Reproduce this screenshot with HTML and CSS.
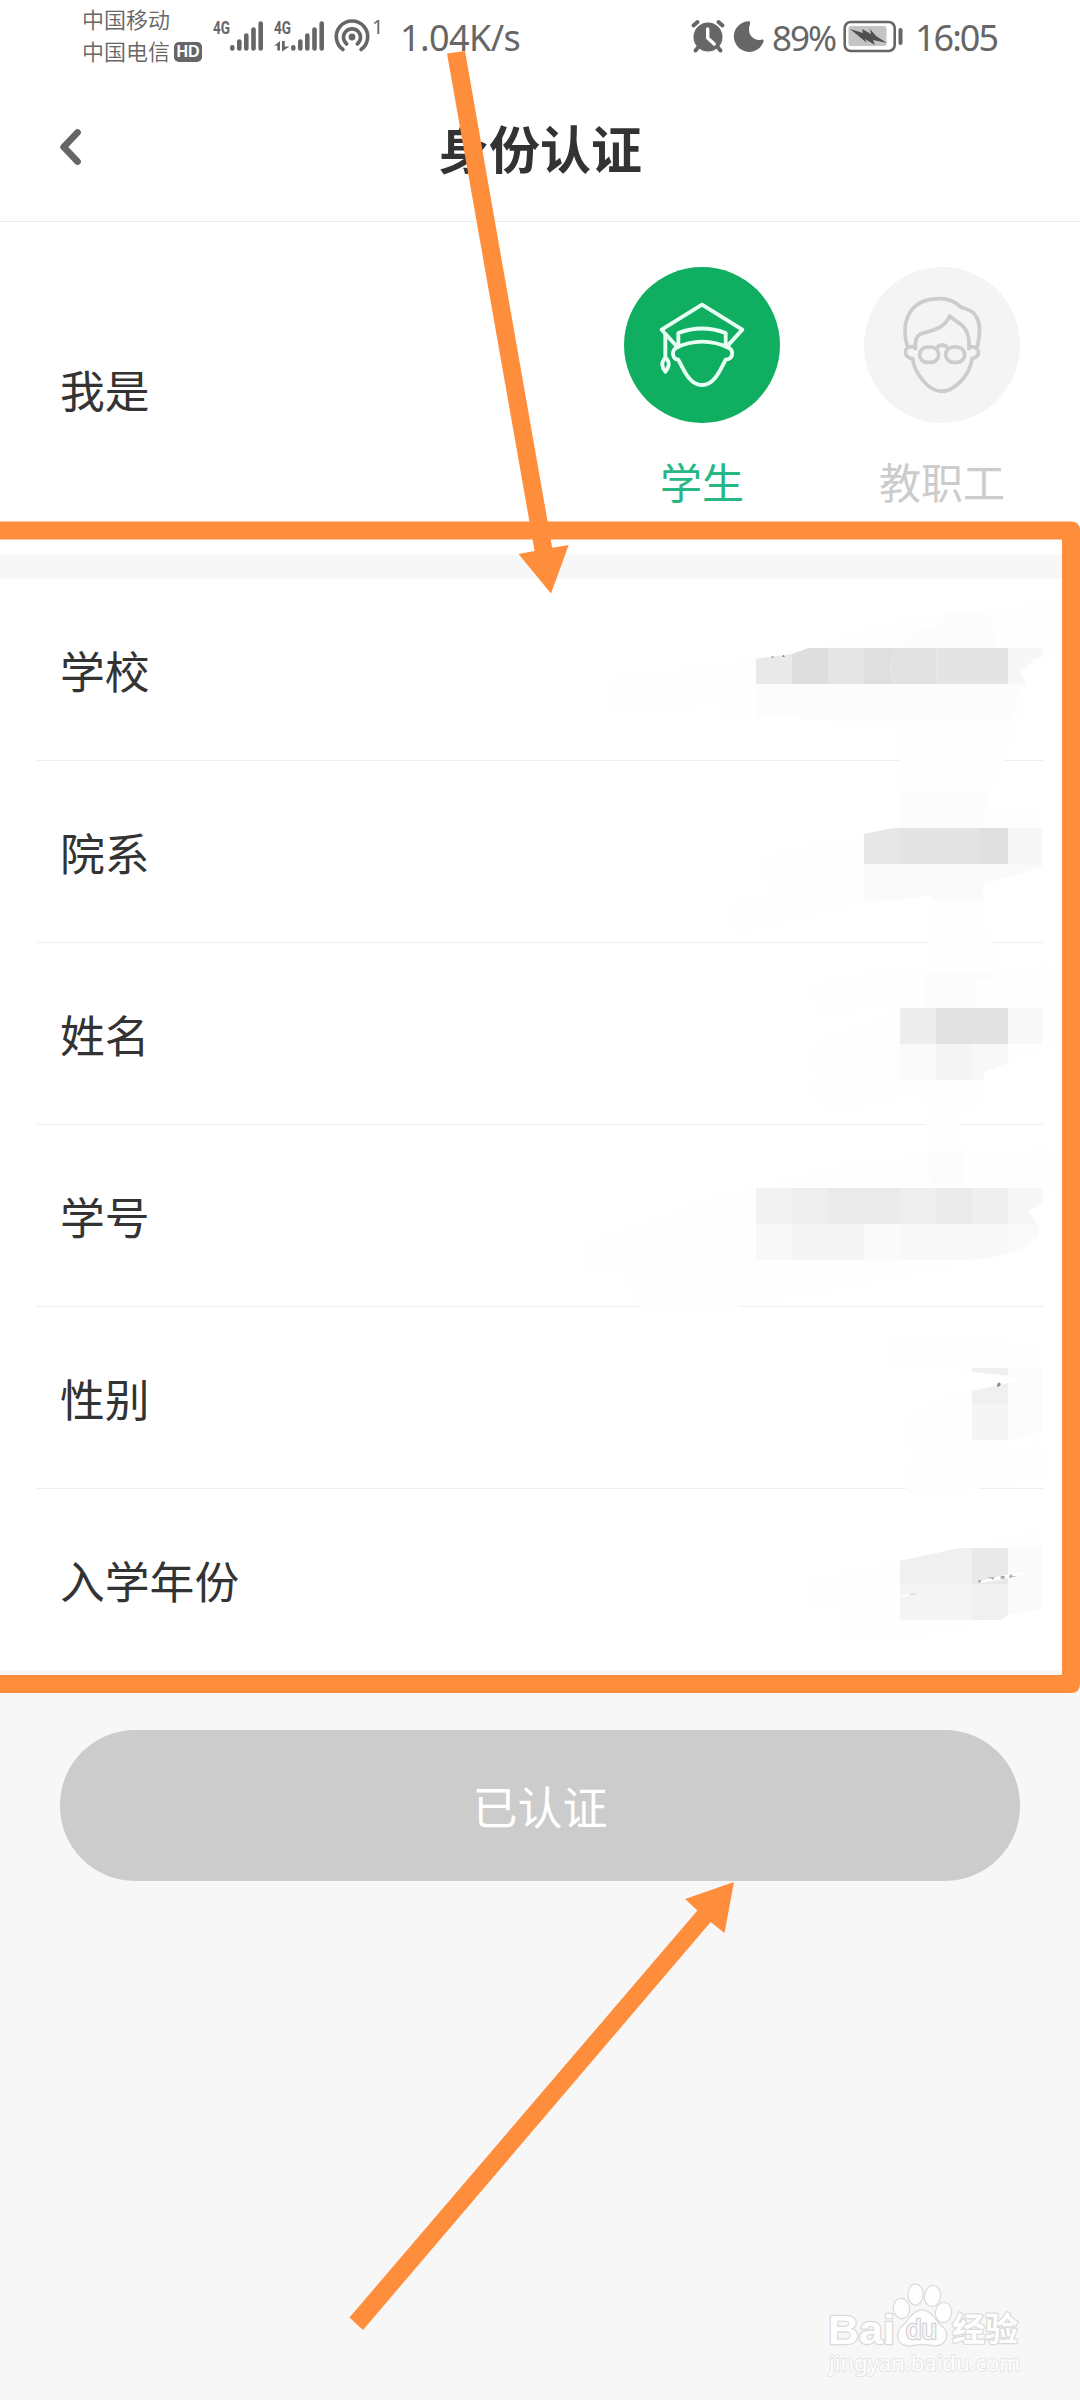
FILE: index.html
```html
<!DOCTYPE html>
<html lang="zh-CN">
<head>
<meta charset="utf-8">
<title>身份认证</title>
<link rel="stylesheet" href="styles.css">
</head>
<body>
<div class="screen">
  <header class="status">
    <div class="carriers">
      <span>中国移动</span>
      <span class="carrier-hd">中国电信<b class="hd">HD</b></span>
    </div>
    <svg class="signals" width="180" height="60" viewBox="0 0 180 60" fill="#666">
      <text class="net" x="1" y="24" textLength="17" lengthAdjust="spacingAndGlyphs">4G</text>
      <g stroke="#666" stroke-width="4.6" stroke-linecap="round">
        <path d="M20.3 37.4v1M27.3 31.500v7M34.300 25.500v13M41.500 19.500v19M48.700 13.500v25"/>
        <path d="M81.300 37.400v1M88.300 31.500v7M95.300 25.500v13M102.500 19.500v19M109.700 13.500v25"/>
      </g>
      <text class="net" x="62" y="24" textLength="17" lengthAdjust="spacingAndGlyphs">4G</text>
      <path d="M62 36l6-5v9.500h-2.700v-5zM70 31h2.700v5.500h4.800l-7.500 5z"/>
      <g fill="none" stroke="#666" stroke-width="3.600" stroke-linecap="round">
        <path d="M131 39.500a15.700 15.700 0 1 1 18 0"/>
        <path d="M134.700 34a8.500 8.500 0 1 1 10.600 0"/>
      </g>
      <circle cx="140" cy="27" r="3.400"/>
      <text class="sup" x="160" y="24">1</text>
    </svg>
    <span class="speed">1.04K/s</span>
    <svg class="alarm" width="80" height="60" viewBox="0 0 80 60" fill="#666">
      <circle cx="18" cy="28" r="14.500"/>
      <g stroke="#666" stroke-width="4" stroke-linecap="round"><path d="M3.500 16.500l4-3.500M32.500 16.500l-4-3.500M8 38.500l-2.500 3M28 38.500l2.500 3"/></g>
      <path d="M17.700 20v9l6.500 6" fill="none" stroke="#fff" stroke-width="3.400" stroke-linecap="round" stroke-linejoin="round"/>
      <path d="M58.500 12.300a15.300 15.300 0 1 0 15 20.500c.6-2-.8-2.500-2.300-2.100-8 1.800-14.500-6-11.500-14.700.8-2.400.7-4-1.200-3.700z"/>
    </svg>
    <span class="percent">89%</span>
    <svg class="battery" width="62" height="34" viewBox="0 0 62 34">
      <rect x="1.700" y="2" width="50" height="29" rx="6" fill="#fff" stroke="#666" stroke-width="2.600"/>
      <rect x="5.500" y="6" width="38" height="20" rx="2.500" fill="#c4c4c4"/>
      <path d="M7 9l13 4-1-4 9 5-1-5 6 7 11 7-14-3 2 5-10-6 2 4z" fill="#505050"/>
      <rect x="55.500" y="8" width="4" height="17" rx="2" fill="#666"/>
    </svg>
    <span class="clock">16:05</span>
  </header>

  <nav class="navbar">
    <svg class="back" width="30" height="44" viewBox="0 0 30 44"><path d="M22.500 7.500L8.700 22l13.800 14.500" fill="none" stroke="#666" stroke-width="6.800" stroke-linecap="round" stroke-linejoin="round"/></svg>
    <h1>身份认证</h1>
  </nav>

  <section class="identity">
    <span class="label">我是</span>
    <div class="roles">
      <div class="role active">
        <svg width="156" height="156" viewBox="0 0 468 468">
          <circle cx="234" cy="234" r="234" fill="#0fae61"/>
          <g fill="none" stroke="#eafff4" stroke-width="11.500" stroke-linejoin="round">
            <path d="M158 238L113 188L234 113L355 188L312 235"/>
            <path d="M163 244V198Q234 171 305 198V244"/>
            <path d="M152 244Q234 204 318 244"/>
            <path d="M163 240C142 243 141 277 163 278C176 300 194 354 234 354C274 354 292 300 305 278C331 275 330 246 308 240"/>
            <path d="M124 198V272M120 277Q108 293 124 314Q142 293 129 277Q124 270 120 277Z"/>
          </g>
        </svg>
        <span>学生</span>
      </div>
      <div class="role">
        <svg width="156" height="156" viewBox="0 0 468 468">
          <circle cx="234" cy="234" r="234" fill="#f4f4f4"/>
          <g fill="none" stroke="#ccc" stroke-width="11" stroke-linejoin="round">
            <path d="M154 250V230Q155 202 181 197C218 188 244 178 257 147C273 166 315 170 315 230V250"/>
            <path d="M132 244C108 169 132 95 228 95C257 95 277 107 290 120C306 127 323 126 334 145C350 166 350 196 339 244"/>
            <path d="M154 240C116 231 116 274 146 275C151 320 196 373 232 373C272 373 318 324 324 275C351 271 352 234 315 240"/>
            <rect x="167" y="240" width="57" height="46" rx="23"/><rect x="245" y="240" width="57" height="46" rx="23"/>
            <path d="M218 242Q234 226 251 242"/>
          </g>
        </svg>
        <span>教职工</span>
      </div>
    </div>
  </section>

  <main class="fields">
    <div class="field">学校</div>
    <div class="field">院系</div>
    <div class="field">姓名</div>
    <div class="field">学号</div>
    <div class="field">性别</div>
    <div class="field">入学年份</div>
  </main>

  <footer class="actions"><button class="submit" disabled>已认证</button></footer>

  <svg class="overlay" width="1080" height="2400" viewBox="0 0 1080 2400">
    <!-- Mosaic strokes over the field values -->
    <g transform="translate(560 590) scale(.33333)">
      <path fill="#fefefe" d="M180 255Q350 240 588 200L780 165Q900 110 1080 75L1480 35V200L1420 210L1385 245L1400 280Q1390 370 1360 450L1320 540L1270 670L1450 650V830L1270 885V1000L1310 1080H1105L1115 915L900 945L540 1035Q490 1010 500 960Q530 920 640 905Q590 850 610 805Q700 765 912 735L1020 690V400H750L710 370L560 400L490 385V345L190 375Q130 350 135 310Q140 270 180 255Z"/>
      <path fill="#fcfcfc" d="M588 282H1390L1350 395L740 390L705 370L588 383ZM1155 70Q1210 55 1275 75Q1310 100 1310 173H1020Q1070 110 1155 105ZM1022 603H1290L1270 670V713H1022Z"/>
      <path fill="#e9e9e9" d="M588 206L696 192V282H588Z"/><path fill="#dedede" d="M696 192L745 174H804V282H696Z"/>
      <path fill="#e5e5e5" d="M804 174H912V282H804Z"/><path fill="#dfdfdf" d="M912 174H1010Q975 225 1005 282H912Z"/><path fill="#e2e2e2" d="M1010 174H1130V282H1005Q975 225 1010 174Z"/><path fill="#e4e4e4" d="M1130 174H1344V282H1130Z"/>
      <path fill="#f7f7f7" d="M1344 174H1446V200L1420 208Q1405 235 1380 245L1398 282H1344Z"/>
      <path fill="#888" d="M632 203l6-6 5 7-5-2zM666 200l4-6 5 7z"/>
      <path fill="#e7e7e7" d="M912 732L1000 714H1020V822H912Z"/><path fill="#e4e4e4" d="M1020 714H1260V822H1020Z"/><path fill="#e0e0e0" d="M1260 714H1344V822H1260Z"/><path fill="#f7f7f7" d="M1344 714H1446V822H1344Z"/>
      <path fill="#fafafa" d="M912 822H1446V830L1270 883V930H1118V915L1020 930H912Z"/>
    </g>
    <g transform="translate(560 950) scale(.33333)">
      <path fill="#fefefe" d="M1100 0H1310L1325 60L1480 40V290L1275 365L1280 440Q1270 480 1200 475V550L1215 610L1480 590V730L1405 785Q1440 800 1440 850Q1430 890 1340 915L800 1030L470 1080H260Q200 1050 205 975Q130 980 85 960Q50 900 100 865Q300 810 390 760L590 705L800 650L1105 610L1090 430L850 485Q740 480 740 400L775 375Q740 350 750 290L800 260L1020 180L780 188Q745 160 760 100Q880 60 1095 50Z"/>
      <path fill="#fcfcfc" d="M1095 66H1320L1275 96L1240 90L1255 174H1095ZM1100 605H1205L1215 714H1115Z"/>
      <path fill="#ededed" d="M1020 174H1128V282H1020Z"/><path fill="#e2e2e2" d="M1128 174H1344V282H1128Z"/><path fill="#f8f8f8" d="M1344 174H1446V282H1344Z"/>
      <path fill="#fafafa" d="M1020 282H1128V390H1020Z"/><path fill="#f5f5f5" d="M1128 282H1238V390H1128Z"/><path fill="#f8f8f8" d="M1238 282H1344V340L1273 365V390H1238Z"/>
      <path fill="#f2f2f2" d="M588 714H696V822H588Z"/><path fill="#eee" d="M696 714H804V822H696Z"/><path fill="#eaeaea" d="M804 714H1020V822H804Z"/><path fill="#eee" d="M1020 714H1128V822H1020Z"/><path fill="#ebebeb" d="M1128 714H1238V822H1128Z"/><path fill="#efefef" d="M1238 714H1344V822H1238Z"/><path fill="#f7f7f7" d="M1344 714H1446V765L1405 783L1430 822H1344Z"/>
      <path fill="#f8f8f8" d="M588 822H696V930H588ZM1020 822H1344V910Q1280 930 1200 930H1020Z"/><path fill="#f5f5f5" d="M696 822H912V930H696Z"/><path fill="#fafafa" d="M912 822H1020V930H912ZM1344 822H1435Q1455 880 1344 910Z"/>
    </g>
    <g transform="translate(560 1310) scale(.33333)">
      <path fill="#fefefe" d="M990 85Q1150 50 1450 110V370L1200 435L1455 400V510L1280 530Q1180 560 1060 560Q1020 530 1030 490L1070 445Q1000 390 1035 320Q1120 260 1236 235L1380 210L1236 185L985 180ZM740 810L1200 714L1450 650V895L1320 930Q1000 1010 860 995Q820 950 855 900L750 895Z"/>
      <path fill="#f0f0f0" d="M1236 174H1344V197L1236 186ZM1236 243L1344 220V282H1236Z"/><path fill="#f5f5f5" d="M1236 282H1344V390H1236Z"/><path fill="#fbfbfb" d="M1344 174H1446V362L1344 390V225L1390 210L1344 200Z"/>
      <path fill="#888" d="M1312 222l4-5 7 5-5 7-7 1z"/>
      <path fill="#f0f0f0" d="M1020 752L1200 714H1236V822H1020Z"/><path fill="#e9e9e9" d="M1236 714H1344V822H1236Z"/><path fill="#fafafa" d="M1344 714H1446V895L1344 915Z"/><path fill="#f4f4f4" d="M1020 822H1236V930H1020Z"/><path fill="#f0f0f0" d="M1236 822H1344V915L1320 930H1236Z"/>
      <path fill="#fff" d="M1250 815L1345 793L1415 780L1350 803L1270 818ZM1020 858L1050 852H1075L1020 863Z"/>
      <path fill="#aaa" d="M1255 810h9l-3 8h-6zM1280 803l24-2-6 9-5-5zM1322 798h12v8h-12zM1348 797l8-6-1 8 15-1-22 6z"/><path fill="#ccc" d="M1045 854l13-4 15 3z"/>
    </g>

    <!-- Highlight frame and arrows -->
    <g fill="#ff8e3c">
      <path fill-rule="evenodd" d="M0 521.500H1071Q1080 521.500 1080 530.500V1684Q1080 1693 1071 1693H0V1675H1062V539.500H0Z"/>
      <path d="M447 53.500L465 51L552.200 547.700L568.700 545L551 593.500L518.500 554L534.600 551Z"/>
      <path d="M349.500 2317.500L697.400 1910.500L685 1899L734 1882L724.500 1933L710.700 1922L363 2330Z"/>
    </g>

    <!-- Watermark -->
    <g fill="#fefefe" stroke="#dadada" stroke-width="2.400" paint-order="stroke" stroke-linejoin="round">
      <text class="wm-brand" x="828" y="2344" textLength="67" lengthAdjust="spacingAndGlyphs">Bai</text>
      <ellipse cx="901.500" cy="2308.500" rx="7.500" ry="9.500" transform="rotate(-8 901.500 2308.500)"/>
      <ellipse cx="915.500" cy="2294.500" rx="7" ry="10"/>
      <ellipse cx="932.500" cy="2296" rx="7.500" ry="10" transform="rotate(8 932.500 2296)"/>
      <ellipse cx="943.500" cy="2312.500" rx="7.500" ry="9.500" transform="rotate(8 943.500 2312.500)"/>
      <path d="M909 2319Q922 2302 935 2319Q938 2324 943 2328C951 2337 943 2347 932 2345Q922 2343 912 2345C900 2347 895 2337 901 2328Q906 2324 909 2319Z"/>
      <text class="wm-du" x="906" y="2339" textLength="31" lengthAdjust="spacingAndGlyphs" fill="#f7f7f7" stroke="#d2d2d2">du</text>
      <text class="wm-cn" x="952" y="2341" textLength="66" lengthAdjust="spacingAndGlyphs">经验</text>
      <text class="wm-url" x="829" y="2371" textLength="191" lengthAdjust="spacingAndGlyphs" stroke="#e4e4e4" stroke-width="1.800">jingyan.baidu.com</text>
    </g>
  </svg>
</div>
</body>
</html>
```
FILE: styles.css
```css
* { box-sizing: border-box; }

body {
  margin: 0;
  background: #f7f7f7;
  color: #333;
  font-family: "Noto Sans CJK SC", sans-serif;
}

.screen {
  position: relative;
  width: 1080px;
  height: 2400px;
  overflow: hidden;
}

.status {
  display: flex;
  align-items: center;
  height: 80px;
  padding: 0 0 4px 82px;
  background: #fff;
  color: #666;
}

.carriers {
  display: flex;
  flex-direction: column;
  flex: none;
  width: 130px;
  margin-bottom: 8px;
  font-size: 22px;
  font-weight: 350;
  line-height: 32px;
  white-space: nowrap;
}

.carrier-hd { display: flex; align-items: center; }

.hd {
  width: 28px;
  height: 20px;
  margin: 4px 0 0 4px;
  border-radius: 5px;
  background: #666;
  color: #fff;
  font: bold 16px/20px "Liberation Sans", sans-serif;
  text-align: center;
}

.signals { flex: none; margin-top: 4px; }
.net { font: bold 19px Roboto, sans-serif; }
.sup { font: 20px "Noto Sans", sans-serif; }

.speed, .percent, .clock {
  flex: none;
  font-family: "Noto Sans", sans-serif;
  font-size: 36px;
  line-height: 50px;
  letter-spacing: -2px;
  white-space: nowrap;
}

.speed { width: 298px; padding-left: 8px; letter-spacing: -.6px; }
.alarm { width: 80px; margin-top: 2px; flex: none; }
.percent { width: 74px; padding-left: 2px; font-size: 35px; }
.battery { flex: none; margin: 0 1px 2px -1px; }
.clock { margin-left: 9px; }

.navbar {
  display: grid;
  grid-template-columns: 200px 1fr 200px;
  align-items: center;
  height: 142px;
  padding-bottom: 8px;
  background: #fff;
  border-bottom: 1px solid #ececec;
}

.back { margin-left: 55px; }

h1 {
  margin: 0;
  font-size: 51px;
  font-weight: 700;
  line-height: 72px;
  text-align: center;
}

.identity {
  display: flex;
  justify-content: space-between;
  align-items: center;
  height: 333px;
  padding: 0 60px;
  background: #fff;
}

.label, .field { font-size: 44.8px; }

.roles {
  display: flex;
  align-self: flex-start;
  gap: 84px;
  padding-top: 45px;
}

.role {
  display: flex;
  flex-direction: column;
  align-items: center;
  width: 156px;
  color: #ccc;
  font-size: 42px;
  line-height: 60px;
}

.role span { margin-top: 28px; }
.role.active { color: #26b784; }

.fields {
  display: grid;
  grid-template-rows: repeat(5, 182px) 1fr;
  height: 1115px;
  border-top: 24px solid #f7f7f7;
  padding: 0 36px;
  background: #fff;
}

.field {
  display: flex;
  align-items: center;
  padding-left: 24px;
  border-bottom: 1px solid #efefef;
}

.field:last-child { border-bottom: 0; }

.actions { padding: 60px 60px 0; }

.submit {
  display: block;
  width: 100%;
  height: 151px;
  padding: 0;
  border: 0;
  border-radius: 75px;
  background: #ccc;
  color: #fff;
  font: 45px/64px "Noto Sans CJK SC", sans-serif;
}

.overlay {
  position: absolute;
  inset: 0;
  pointer-events: none;
}

.wm-brand { font: bold 41px "Liberation Sans", sans-serif; }
.wm-du { font: 27px "Liberation Sans", sans-serif; }
.wm-cn { font: bold 33px "Noto Sans CJK SC", sans-serif; }
.wm-url { font: 22px "Noto Sans", sans-serif; }
```
